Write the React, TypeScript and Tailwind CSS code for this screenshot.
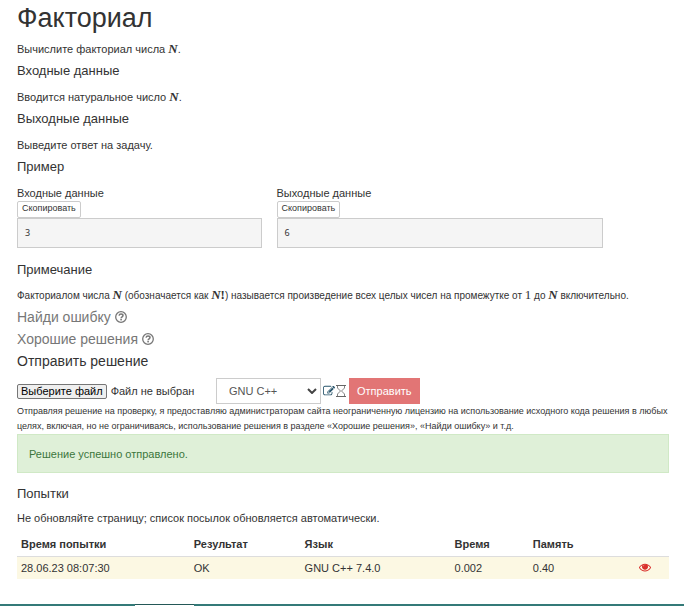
import type { ReactNode } from "react";

const body = "text-[11px] leading-4";
const heading = "text-[13px] leading-[18px]";
const largeHeading = "text-[14px] leading-4";

function MathText({ children }: { children: ReactNode }) {
  return (
    <span className="font-['Liberation_Serif',serif] text-[13px] leading-none font-bold">{children}</span>
  );
}

function N() {
  return (
    <MathText>
      <i>N</i>
    </MathText>
  );
}

function QuestionIcon() {
  return (
    <svg viewBox="0 0 12 12" className="size-3" aria-hidden="true">
      <circle cx="6" cy="6" r="5.3" fill="none" stroke="currentColor" strokeWidth="1.3" />
      <path d="M4 4.6C4.300 3.500 5 3 6 3c1.200 0 2 .6 2 1.600C8 5.800 6.100 5.800 6.100 7.200" fill="none" stroke="currentColor" strokeWidth="1.500" />
      <rect x="5.300" y="7.900" width="1.600" height="1.500" fill="currentColor" />
    </svg>
  );
}

function EditIcon() {
  return (
    <svg viewBox="0 0 1792 1792" className="size-3 text-[#27546b]" fill="currentColor" aria-hidden="true">
      <path d="M888 1184l116-116-152-152-116 116v56h96v96h56zm440-720q-16-16-33 1l-350 350q-17 17-1 33t33-1l350-350q17-17 1-33zm80 594v190q0 119-84.5 203.500t-203.500 84.500h-832q-119 0-203.500-84.500t-84.500-203.500v-832q0-119 84.500-203.500t203.500-84.500h832q63 0 117 25 15 7 18 23 3 17-9 29l-49 49q-14 14-32 8-23-6-45-6h-832q-66 0-113 47t-47 113v832q0 66 47 113t113 47h832q66 0 113-47t47-113v-126q0-13 9-22l64-64q15-15 35-7t20 29zm-96-738l288 288-672 672h-288v-288zm444 132l-92 92-288-288 92-92q28-28 68-28t68 28l152 152q28 28 28 68t-28 68z" />
    </svg>
  );
}

function HourglassIcon() {
  return (
    <svg viewBox="0 0 10 12" className="h-3 w-[10px] text-[#666]" fill="none" stroke="currentColor" aria-hidden="true">
      <path d="M0 .5h10M0 11.500h10" />
      <path d="M1.500 .5v2.500L4.500 6l-3 3v2.500M8.500 .5v2.500L5.500 6l3 3v2.500" strokeWidth=".8" />
    </svg>
  );
}

function EyeIcon() {
  return (
    <svg viewBox="0 128 1792 1792" className="block size-3 text-[#d9302c]" fill="currentColor" aria-hidden="true">
      <path d="M1664 960q-152-236-381-353 61 104 61 225 0 185-131.500 316.500t-316.500 131.500-316.500-131.500-131.500-316.500q0-121 61-225-229 117-381 353 133 205 333.500 326.500t434.500 121.500 434.500-121.500 333.500-326.500zm-720-384q0-20-14-34t-34-14q-125 0-214.500 89.500t-89.500 214.500q0 20 14 34t34 14 34-14 14-34q0-86 61-147t147-61q20 0 34-14t14-34zm848 384q0 34-20 69-140 230-376.500 368.500t-499.500 138.500-499.500-139-376.500-368q-20-35-20-69t20-69q140-229 376.500-368t499.500-139 499.500 139 376.500 368q20 35 20 69z" />
      <circle cx="896" cy="900" r="310" />
    </svg>
  );
}

function Section({ title, textStyle = body, children }: { title: string; textStyle?: string; children: ReactNode }) {
  return (
    <section>
      <h2 className={heading}>{title}</h2>
      <p className={`${textStyle} mt-[9px] mb-[5px]`}>{children}</p>
    </section>
  );
}

function Sample({ title, value, width }: { title: string; value: string; width: string }) {
  return (
    <div className={width}>
      <h3 className={body}>{title}</h3>
      <button type="button" className="block h-[17px] rounded-[2px] border border-[#ccc] bg-white px-1 pb-[3px] text-[9px] leading-3">
        Скопировать
      </button>
      <pre className="h-[30px] border border-[#ccc] bg-[#f5f5f5] px-[7px] py-2 font-['Noto_Sans',sans-serif] text-[9px] leading-3">{value}</pre>
    </div>
  );
}

export default function App() {
  return (
    <div className="flex min-h-screen flex-col bg-white font-['Liberation_Sans',Arial,sans-serif] text-[#333]">
      <main className="grow pt-[2px] pr-[15px] pl-[17px]">
        <h1 className="text-[27px] leading-8">Факториал</h1>
        <p className={`${body} mt-[7px] mb-[5px]`}>
          Вычислите факториал числа <N />.
        </p>
        <Section title="Входные данные">
          Вводится натуральное число <N />.
        </Section>
        <Section title="Выходные данные">Выведите ответ на задачу.</Section>
        <h2 className={heading}>Пример</h2>
        <div className="mt-[9px] mb-[13px] flex gap-[15px]">
          <Sample title="Входные данные" value="3" width="w-3/8" />
          <Sample title="Выходные данные" value="6" width="w-1/2" />
        </div>
        <Section title="Примечание" textStyle="text-[10px] leading-4">
          Факториалом числа <N /> (обозначается как <N />
          <MathText>!</MathText>) называется произведение всех целых чисел на промежутке от{" "}
          <span className="font-['Liberation_Serif',serif] text-[13px] leading-none">1</span> до <N /> включительно.
        </Section>
        <h2 className={`${largeHeading} mb-[6px] flex items-center gap-1 text-[#777]`}>
          Найди ошибку <QuestionIcon />
        </h2>
        <h2 className={`${largeHeading} mb-[6px] flex items-center gap-1 text-[#777]`}>
          Хорошие решения <QuestionIcon />
        </h2>
        <h2 className={largeHeading}>Отправить решение</h2>
        <form className="mt-[9px] flex items-center">
          <label className="flex w-[199px] items-center gap-1 text-[11px] leading-4">
            <input type="file" className="sr-only" />
            <span className="rounded-[2px] border border-[#767676] bg-[#efefef] px-[3px] leading-[13px] text-black">Выберите файл</span>
            <span>Файл не выбран</span>
          </label>
          <div className="relative">
            <select aria-label="Язык" defaultValue="GNU C++" className="block h-[26px] w-[105px] appearance-none border border-[#ccc] bg-white px-3 text-[11px] text-[#555]">
              <option>GNU C++</option>
            </select>
            <svg viewBox="0 0 10 6" className="pointer-events-none absolute top-[10px] right-1 h-[6px] w-[10px]" fill="none" stroke="#444" strokeWidth="2" aria-hidden="true">
              <path d="M1 1l4 4 4-4" />
            </svg>
          </div>
          <span className="mr-[3px] ml-[2px] flex items-center gap-[1px]">
            <EditIcon />
            <HourglassIcon />
          </span>
          <button type="button" className="h-[26px] bg-[#e27575] px-2 text-[11px] text-white">
            Отправить
          </button>
        </form>
        <p className="text-[9px] leading-[15px]">
          Отправляя решение на проверку, я предоставляю администраторам сайта неограниченную лицензию на использование исходного кода решения в любых целях, включая, но не ограничиваясь, использование решения в разделе «Хорошие решения», «Найди ошибку» и т.д.
        </p>
        <div role="status" className={`${body} border border-[#d0e9c6] bg-[#dff0d8] px-[11px] pt-[11px] pb-[10px] text-[#3c763d]`}>
          Решение успешно отправлено.
        </div>
        <h2 className={`${heading} mt-[12px]`}>Попытки</h2>
        <p className={`${body} mt-[7px]`}>Не обновляйте страницу; список посылок обновляется автоматически.</p>
        <table className="mt-[7px] w-full table-fixed text-left text-[11px] leading-[14px]">
          <thead>
            <tr className="border-b border-[#ddd] leading-[15px]">
              <th className="w-[26.5%] p-1">Время попытки</th>
              <th className="w-[17%] p-1">Результат</th>
              <th className="w-[23%] p-1">Язык</th>
              <th className="w-[12%] p-1">Время</th>
              <th className="w-[16.3%] p-1">Память</th>
              <th className="w-[5.2%] p-1" />
            </tr>
          </thead>
          <tbody>
            <tr className="bg-[#fcf8e3]">
              <td className="p-1">28.06.23 08:07:30</td>
              <td className="p-1">OK</td>
              <td className="p-1">GNU C++ 7.4.0</td>
              <td className="p-1">0.002</td>
              <td className="p-1">0.40</td>
              <td className="p-1">
                <EyeIcon />
              </td>
            </tr>
          </tbody>
        </table>
      </main>
      <footer className="flex h-[2px] bg-[#347a78]">
        <div className="ml-[135px] h-[2px] w-[59px] border-t border-[#245857] bg-white" />
      </footer>
    </div>
  );
}
